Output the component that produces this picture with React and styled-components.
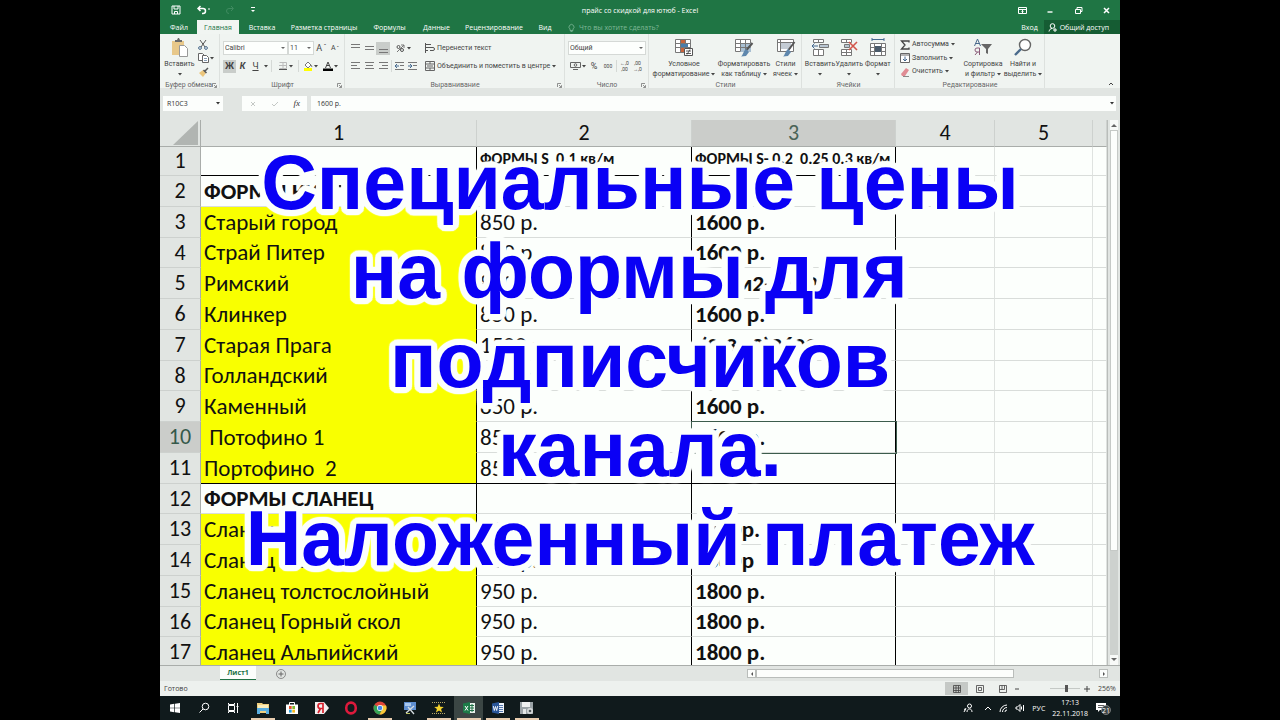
import React from 'react';
import styled, { createGlobalStyle, css } from 'styled-components';

const GlobalStyle = createGlobalStyle`
	* {
		box-sizing: border-box;
	}
	body {
		margin: 0;
		background: #000;
	}
	button,
	input,
	select {
		font: inherit;
		color: inherit;
		border: 0;
		padding: 0;
		margin: 0;
		background: none;
		border-radius: 0;
	}
`;

const rows = [
	{ name: '', small: 'ФОРМЫ S  0.1 кв/м', big: 'ФОРМЫ S- 0.2  0.25 0.3 кв/м', kind: 'head' },
	{ name: 'ФОРМЫ КИРПИЧ', kind: 'section' },
	{ name: 'Старый город', small: '850 р.', big: '1600 р.' },
	{ name: 'Страй Питер', small: '850 р.', big: '1600 р.' },
	{ name: 'Римский', small: '850 р.', big: '0.25м2-1600' },
	{ name: 'Клинкер', small: '850 р.', big: '1600 р.' },
	{ name: 'Старая Прага', small: '1500 р.', big: ' (0.3с 2)2600 р.' },
	{ name: 'Голландский', small: '850 р.', big: '' },
	{ name: 'Каменный', small: '850 р.', big: '1600 р.' },
	{ name: ' Потофино 1', small: '850 р.', big: '1600 р.', active: true },
	{ name: 'Портофино  2', small: '850 р.', big: '', last: true },
	{ name: 'ФОРМЫ СЛАНЕЦ', kind: 'section' },
	{ name: 'Сланец', small: '950 р.', big: '1800р.' },
	{ name: 'Сланец мелкий', small: '950 р.', big: '1800р' },
	{ name: 'Сланец толстослойный', small: '950 р.', big: '1800 р.' },
	{ name: 'Сланец Горный скол', small: '950 р.', big: '1800 р.' },
	{ name: 'Сланец Альпийский', small: '950 р.', big: '1800 р.' },
];

const Svg = ({ w = 12, h = w, children, ...rest }) => (
	<svg
		width={w}
		height={h}
		viewBox={`0 0 ${w} ${h}`}
		fill="none"
		stroke="currentColor"
		aria-hidden="true"
		{...rest}
	>
		{children}
	</svg>
);

const Caret = () => (
	<Svg w={4} h={3}>
		<path d="M0 0h4L2 2.4z" fill="currentColor" stroke="none" />
	</Svg>
);

const Launcher = () => (
	<Svg w={5}>
		<path d="M.5 4V.5H4M2 2l2.2 2.2M4.5 2.2v2.3H2.2" strokeWidth=".7" />
	</Svg>
);

const Lines = ({ ys, xs = [[1, 10]] }) => (
	<Svg w={11} h={11}>
		{ys.map((y, i) => {
			const [a, b] = xs[i % xs.length];
			return <path key={y} d={`M${a} ${y}H${b}`} stroke="#777" />;
		})}
	</Svg>
);

const PasteIcon = () => (
	<Svg w={20} h={19}>
		<path d="M2 3h12v14H2z" fill="#e8c88a" stroke="none" />
		<path d="M5 4V2h2l1-2h1l1 2h2v2z" fill="#6b6b6b" stroke="none" />
		<path d="M9.5 7.5h5l3 3v8h-8z" fill="#fff" stroke="#999" />
	</Svg>
);

const CutIcon = () => (
	<Svg w={10}>
		<path d="M2 0l5 7M8 0L3 7" stroke="#555" />
		<circle cx="2" cy="8" r="1.4" stroke="#4a6a8c" />
		<circle cx="8" cy="8" r="1.4" stroke="#4a6a8c" />
	</Svg>
);

const CopyIcon = () => (
	<Svg w={11} h={10} stroke="#666">
		<path d="M.5.5h4l2 2v5h-6z" fill="#fff" />
		<path d="M4.5 2.5h4l2 2v5h-6z" fill="#fff" />
		<path d="M6 5.5h3M6 7.5h3" stroke="#8aa0b8" />
	</Svg>
);

const BrushIcon = () => (
	<Svg w={11} h={10}>
		<path d="M1 6l4-3 3 3-3 4z" fill="#ecc67c" stroke="none" />
		<path d="M5.500 3l3 3M7 4l3-3" stroke="#555" strokeWidth="1.5" />
	</Svg>
);

const CondIcon = () => (
	<Svg w={20} h={19} stroke="#777">
		<path d="M1.500 1.500h15v13h-15zM1.500 5.500h15M1.500 9.500h15M6.500 1.500v13M11.500 1.500v13" fill="#fff" />
		<path d="M7 2h4v3H7zM7 10h3v4H7z" fill="#c8643c" stroke="none" />
		<path d="M7 6h7v3H7z" fill="#4a7dab" stroke="none" />
		<path d="M10.500 10.500h8v7h-8z" fill="#fff" stroke="#555" />
		<path d="M12 13h5M12 15.500h5M16 11.500l-3 5" stroke="#333" strokeWidth=".8" />
	</Svg>
);

const TableIcon = () => (
	<Svg w={20} h={19} stroke="#777">
		<path d="M1.500 1.500h15v12h-15z" fill="#fff" />
		<path d="M6 5h11v9H6z" fill="#a9bfd2" stroke="none" />
		<path d="M1.500 5.500h15M1.500 9.500h15M6.500 1.500v12M11.500 1.500v12" />
		<path d="M18.500 5l-6 7" stroke="#555" strokeWidth="2" />
		<path d="M12 11l3 3-3 4-5 .5c2-1 2-5 5-7.500z" fill="#5e87ad" stroke="none" />
	</Svg>
);

const StyleIcon = () => (
	<Svg w={20} h={19} stroke="#777">
		<path d="M1.500 1.500h16v12h-16z" fill="#fff" />
		<path d="M5 5h10v6H5z" fill="#c3cbd4" stroke="none" />
		<path d="M1.500 4.500h16M4.500 1.500v12" />
		<path d="M18.500 4l-6 8" stroke="#555" strokeWidth="2" />
		<path d="M12 11l3 3-3 4-5 .5c2-1 2-5 5-7.500z" fill="#5e87ad" stroke="none" />
	</Svg>
);

const InsertIcon = () => (
	<Svg w={20} h={19} stroke="#777">
		<path d="M3.500 1.500h10v3h-10zM8.500 1.500v3M3.500 11.500h10v6h-10zM8.500 11.500v6" fill="#fff" />
		<path d="M9.500 6.500h9v3h-9z" fill="#b9c6d2" />
		<path d="M8 8H2M4.500 5.500L2 8l2.500 2.500" stroke="#44698f" />
	</Svg>
);

const DeleteIcon = () => (
	<Svg w={20} h={19} stroke="#777">
		<path d="M2.500 1.500h10v3h-10zM7.500 1.500v3M2.500 11.500h10v6h-10zM7.500 11.500v6M2.500 14.500h10" fill="#fff" />
		<path d="M5.500 6.500h5v3h-5z" fill="#b9c6d2" />
		<path d="M10 4l8 8M18 4l-8 8" stroke="#d2554a" strokeWidth="1.600" />
	</Svg>
);

const FormatIcon = () => (
	<Svg w={20} h={19} stroke="#777">
		<path d="M4 1.500h12M4 0v3M16 0v3" stroke="#44698f" />
		<path d="M2.500 5.500h15v12h-15zM2.500 9.500h15M2.500 13.500h15M6.500 5.500v12M13.500 5.500v12" fill="#fff" />
		<path d="M7 8h6v6H7z" fill="#4b5b6b" stroke="none" />
	</Svg>
);

const SortIcon = () => (
	<Svg w={20} h={19}>
		<path d="M1.500 8l3-7 3 7M2.500 5.500h4" stroke="#4a6a8c" />
		<path d="M6.500 17v-7H4a2 2 0 0 0 0 4h2.500M4.500 14l-2.500 3" stroke="#8a5a78" />
		<path d="M8 6h11l-4 5v5l-2-1v-4z" fill="#666" stroke="none" />
	</Svg>
);

const FindIcon = () => (
	<Svg w={20} h={19}>
		<circle cx="12" cy="7" r="5.500" fill="#fff" stroke="#666" strokeWidth="1.400" />
		<path d="M8 11l-6 6" stroke="#4a6a8c" strokeWidth="2.400" />
	</Svg>
);

const WindowsLogo = () => (
	<Svg w={12} stroke="none" fill="#fff">
		<path d="M1 2.400l4.300-.6v3.900H1zM6 1.700l5-.7v4.700H6zM1 6.300h4.300v3.900L1 9.600zM6 6.300h5V11l-5-.7z" />
	</Svg>
);

const SearchIcon = () => (
	<Svg w={12} stroke="#fff">
		<circle cx="7.500" cy="4.500" r="3.300" />
		<path d="M5 7L1.500 10.500" />
	</Svg>
);

const TaskViewIcon = () => (
	<Svg w={12} stroke="#fff">
		<path d="M1.500 3.500h6v5h-6zM1.500 1v1.500h6V1M1.500 11V9.500h6V11M10.500 1v10M9.500 4.500h2" />
	</Svg>
);

const FolderIcon = () => (
	<Svg w={14} stroke="none">
		<path d="M1 2h5l1 1h6v9H1z" fill="#f0d080" />
		<path d="M2 4h10v5H2z" fill="#fbeebc" />
		<path d="M1 7h12v6h-3v-3H4v3H1z" fill="#5aaee0" />
	</Svg>
);

const StoreIcon = () => (
	<Svg w={14} stroke="none">
		<path d="M4.500 4V1.500h5V4" stroke="#fff" />
		<path d="M1 3.500h12V13H1z" fill="#fff" />
		<path d="M4 5h2.700v3H4z" fill="#e5532d" />
		<path d="M7.300 5H10v3H7.300z" fill="#7cb82f" />
		<path d="M4 8.600h2.700v3H4z" fill="#2e9fdc" />
		<path d="M7.300 8.600H10v3H7.300z" fill="#f6b71c" />
	</Svg>
);

const YandexIcon = () => (
	<Svg w={16} h={14}>
		<path d="M1 1h9l5 6-5 6H1z" fill="#f2eeee" stroke="none" />
		<path d="M9 12V2.500H6.500a2.500 2.500 0 0 0 0 5H9M6.500 7.500L4 12" stroke="#d8202c" strokeWidth="1.700" />
	</Svg>
);

const OperaIcon = () => (
	<Svg w={14}>
		<ellipse cx="7" cy="7" rx="4.800" ry="5.400" stroke="#dd1a3c" strokeWidth="2.600" />
	</Svg>
);

const ChromeIcon = () => (
	<Svg w={14} stroke="none">
		<circle cx="7" cy="7" r="6.500" fill="#e0463a" />
		<path d="M7 7L1.400 3.800A6.500 6.500 0 0 0 6.500 13.500L9.500 8z" fill="#35a455" />
		<path d="M7 4.500h6a6.500 6.500 0 0 1-6.500 9L9.500 8z" fill="#f7ca38" />
		<circle cx="7" cy="7" r="3" fill="#fff" />
		<circle cx="7" cy="7" r="2.300" fill="#4688e8" />
	</Svg>
);

const MonitorIcon = () => (
	<Svg w={14} stroke="none">
		<path d="M1 1h12v8H1z" fill="#5e8ed0" />
		<path d="M2 2h6v3H2z" fill="#a8c8ee" />
		<path d="M3 12l8-7M5 6l6 7" stroke="#d5dce0" strokeWidth="1.300" />
		<path d="M3 12h4v1H3z" fill="#b8c060" />
	</Svg>
);

const StarIcon = () => (
	<Svg w={14} stroke="none">
		<path d="M0 1.500h14M0 12.500h14" stroke="#b8a868" strokeDasharray="1 1" />
		<path d="M7 2.500l1.300 3.200 3.500.2-2.700 2.200.9 3.400-3-1.900-3 1.900.9-3.400L2.200 5.900l3.500-.2z" fill="#f5d32c" />
	</Svg>
);

const ExcelIcon = () => (
	<Svg w={14} stroke="none">
		<path d="M7 2h6v10H7z" fill="#e8f2ec" />
		<path d="M8 4.500h4M8 7h4M8 9.500h4M10 3v8" stroke="#217346" />
		<path d="M1 2.500L8 1v12l-7-1.500z" fill="#1d7c48" />
		<path d="M3 5l3 4.500M6 5L3 9.500" stroke="#fff" />
	</Svg>
);

const WordIcon = () => (
	<Svg w={14} stroke="none">
		<path d="M7 2h6v10H7z" fill="#eef2fa" />
		<path d="M8 4.500h4M8 6.500h4M8 8.500h4M8 10.500h4" stroke="#2a5699" strokeWidth=".8" />
		<path d="M1 2.500L8 1v12l-7-1.500z" fill="#2a5699" />
		<path d="M2.300 5l1 4.500 1.200-4 1.200 4 1-4.500" stroke="#fff" strokeWidth=".9" />
	</Svg>
);

const RecorderIcon = () => (
	<Svg w={16} h={14} stroke="none">
		<path d="M1 1h13v12H1z" fill="#9aa2a6" />
		<path d="M3 1h8v5H3z" fill="#eef0f0" />
		<path d="M4 8h3v5H4z" fill="#e4e8e8" />
		<circle cx="11" cy="10" r="3" fill="#d5d9da" />
		<circle cx="11" cy="10" r="1.300" fill="#50585c" />
	</Svg>
);

const tabs = [
	['Файл', 36],
	['Главная', 42, true],
	['Вставка', 46],
	['Разметка страницы', 78],
	['Формулы', 53],
	['Данные', 41],
	['Рецензирование', 74],
	['Вид', 28],
];

const taskbar = [
	[WindowsLogo, 'Пуск'],
	[SearchIcon, 'Поиск'],
	[TaskViewIcon, 'Представление задач'],
	[FolderIcon, 'Проводник', true],
	[StoreIcon, 'Магазин'],
	[YandexIcon, 'Яндекс'],
	[OperaIcon, 'Opera'],
	[ChromeIcon, 'Chrome', true],
	[MonitorIcon, 'Экран'],
	[StarIcon, 'Редактор', true],
	[ExcelIcon, 'Excel', true, true],
	[WordIcon, 'Word', true],
	[RecorderIcon, 'Запись', true],
];

const Big = ({ icon: I, lines, width }) => (
	<BigButton $width={width}>
		<I />
		<span>{lines[0]}</span>
		<span>
			{lines[1]} <Caret />
		</span>
	</BigButton>
);

const Ribbon = () => (
	<RibbonBar>
		<Group $width={60}>
			<GroupBody>
				<Big icon={PasteIcon} lines={['Вставить', '']} width={33} />
				<Stack>
					<Tool aria-label="Вырезать"><CutIcon /></Tool>
					<Tool aria-label="Копировать"><CopyIcon /><Caret /></Tool>
					<Tool aria-label="Формат по образцу"><BrushIcon /></Tool>
				</Stack>
			</GroupBody>
			<Caption>Буфер обмена <Launcher /></Caption>
		</Group>
		<Group $width={125}>
			<Rows>
				<ToolRow>
					<Combo $width={65}>
						<select aria-label="Шрифт"><option>Calibri</option></select>
					</Combo>
					<Combo $width={26}>
						<select aria-label="Размер"><option>11</option></select>
					</Combo>
					<Tool $width={15} $letter>A<sup>ˆ</sup></Tool>
					<Tool $width={12}>A<sup>ˇ</sup></Tool>
				</ToolRow>
				<ToolRow>
					<Tool $width={13} $on $letter><b>Ж</b></Tool>
					<Tool $width={13} $letter><b><i>К</i></b></Tool>
					<Tool $width={13} $letter><u>Ч</u></Tool>
					<Tool $width={8} aria-label="Ещё"><Caret /></Tool>
					<Divider />
					<Tool $width={24} aria-label="Границы">
						<Svg w={10}><path d="M1.500 1.500h7v6h-7M5 1.500v6M1 4.500h8" stroke="#bbb" /><path d="M1 8.500h8" stroke="#555" /></Svg>
						<Caret />
					</Tool>
					<Divider />
					<Tool $width={20} aria-label="Цвет заливки">
						<Svg w={10}><path d="M2 4l3-3 3 3-3 3zM8 4l1 2" stroke="#777" fill="#fff" /><path d="M1 7h8v3H1z" fill="#ff0" stroke="none" /></Svg>
						<Caret />
					</Tool>
					<Tool $width={20} aria-label="Цвет текста">
						<Svg w={10}><path d="M2.500 7L5 1l2.500 6M3.500 4.500h3" stroke="#444" /><path d="M0 7.500h10V10H0z" fill="#000" stroke="none" /></Svg>
						<Caret />
					</Tool>
				</ToolRow>
			</Rows>
			<Caption>Шрифт <Launcher /></Caption>
		</Group>
		<Group $width={220}>
			<Rows>
				<ToolRow>
					<Tool $width={14} aria-label="По верхнему краю"><Lines ys={[1.5, 4.5]} /></Tool>
					<Tool $width={14} aria-label="По середине"><Lines ys={[3.5, 6.5]} /></Tool>
					<Tool $width={14} $on aria-label="По нижнему краю"><Lines ys={[6.5, 9.5]} /></Tool>
					<Tool $width={26} aria-label="Ориентация">
						<Svg w={11}><path d="M2 9L9 2M6 2h3v3" stroke="#777" /><circle cx="3.500" cy="4" r="1.500" stroke="#555" /><circle cx="7" cy="7" r="1.500" stroke="#555" /></Svg>
						<Caret />
					</Tool>
					<WideTool>
						<Svg w={10} stroke="#555"><path d="M1 1.500h5M1 4.500h7a1 1 0 0 1 0 3H5M1 7.500h2M.5 0v10" /></Svg>
						Перенести текст
					</WideTool>
				</ToolRow>
				<ToolRow>
					<Tool $width={14} aria-label="По левому краю"><Lines ys={[1.5, 4.5, 7.5]} xs={[[1, 10], [1, 7]]} /></Tool>
					<Tool $width={14} aria-label="По центру"><Lines ys={[1.5, 4.5, 7.5]} xs={[[1, 10], [2, 9]]} /></Tool>
					<Tool $width={14} aria-label="По правому краю"><Lines ys={[1.5, 4.5, 7.5]} xs={[[1, 10], [4, 10]]} /></Tool>
					<Divider />
					<Tool $width={13} aria-label="Уменьшить отступ">
						<Svg w={11} stroke="#777"><path d="M1 1.500h9M6 4.500h4M1 8.500h9" /><path d="M5 5H1M3 3L1 5l2 2" stroke="#44698f" /></Svg>
					</Tool>
					<Tool $width={13} aria-label="Увеличить отступ">
						<Svg w={11} stroke="#777"><path d="M1 1.500h9M6 4.500h4M1 8.500h9" /><path d="M1 5h4M3 3l2 2-2 2" stroke="#44698f" /></Svg>
					</Tool>
					<WideTool>
						<Svg w={10} stroke="#666"><path d="M.5.5h9v9h-9zM.5 3h9M.5 7h9M5 .5V3M5 7v2.500M2 5h6" /></Svg>
						Объединить и поместить в центре <Caret />
					</WideTool>
				</ToolRow>
			</Rows>
			<Caption>Выравнивание <Launcher /></Caption>
		</Group>
		<Group $width={84}>
			<Rows>
				<ToolRow>
					<Combo $width={78}>
						<select aria-label="Числовой формат"><option>Общий</option></select>
					</Combo>
				</ToolRow>
				<ToolRow>
					<Tool $width={19} aria-label="Финансовый формат">
						<Svg w={11} stroke="#666"><path d="M.5 1.500h10v5H.5z" /><circle cx="5.500" cy="4" r="1.300" /><path d="M3 8.500h5" /></Svg>
						<Caret />
					</Tool>
					<Tool $width={14} $letter>%</Tool>
					<Tool $width={14} $tiny>000</Tool>
					<Divider />
					<Tool $width={13} $tiny>←,0<br />,00</Tool>
					<Tool $width={13} $tiny>,00<br />→,0</Tool>
				</ToolRow>
			</Rows>
			<Caption>Число <Launcher /></Caption>
		</Group>
		<Group $width={153}>
			<GroupBody>
				<Big icon={CondIcon} lines={['Условное', 'форматирование']} width={64} />
				<Big icon={TableIcon} lines={['Форматировать', 'как таблицу']} width={56} />
				<Big icon={StyleIcon} lines={['Стили', 'ячеек']} width={27} />
			</GroupBody>
			<Caption>Стили</Caption>
		</Group>
		<Group $width={93}>
			<GroupBody>
				<Big icon={InsertIcon} lines={['Вставить', '']} width={30} />
				<Big icon={DeleteIcon} lines={['Удалить', '']} width={30} />
				<Big icon={FormatIcon} lines={['Формат', '']} width={30} />
			</GroupBody>
			<Caption>Ячейки</Caption>
		</Group>
		<Group $width={150}>
			<GroupBody>
				<Stack $wide>
					<Tool $gap>
						<Svg w={10}><path d="M9 2.500V1H1.500L5 5 1.500 9H9V7.500" stroke="#444" strokeWidth="1.300" /></Svg>
						Автосумма <Caret />
					</Tool>
					<Tool $gap>
						<Svg w={10} stroke="#666"><path d="M.5.5h9v9h-9zM.5 2h9" fill="#fff" /><path d="M5 3.500v4.500M3 6l2 2 2-2" stroke="#44698f" /></Svg>
						Заполнить <Caret />
					</Tool>
					<Tool $gap>
						<Svg w={10}><path d="M1 7l5-6 3 2-4 6H2z" fill="#e08c94" stroke="none" /><path d="M3 9.500h6" stroke="#888" /></Svg>
						Очистить <Caret />
					</Tool>
				</Stack>
				<Big icon={SortIcon} lines={['Сортировка', 'и фильтр']} width={42} />
				<Big icon={FindIcon} lines={['Найти и', 'выделить']} width={38} />
			</GroupBody>
			<Caption>Редактирование</Caption>
		</Group>
		<Collapse aria-label="Свернуть ленту">
			<Svg w={6} h={4}><path d="M1 3l2-2 2 2" /></Svg>
		</Collapse>
	</RibbonBar>
);

const Sheet = () => (
	<SheetArea>
		<Grid>
			<colgroup>
				{[41, 276, 215, 204, 99, 98].map((w, i) => <Col key={i} $w={w} />)}
				<col />
			</colgroup>
			<thead>
				<tr>
					<Corner><Svg w={26} h={24}><path d="M26 0v24H1z" fill="#b1b5b2" stroke="none" /></Svg></Corner>
					{[1, 2, 3, 4, 5, ''].map(n => (
						<ColHead key={n} $on={n === 3}>{n}</ColHead>
					))}
				</tr>
			</thead>
			<tbody>
				{rows.map((r, i) => (
					<Row key={i} $first={i === 0}>
						<RowHead $on={r.active}>{i + 1}</RowHead>
						<Cell $fill={!r.kind} $bold={r.kind} $frame $under={r.last || r.kind === 'head'}>{r.name}</Cell>
						<Cell $frame $head={r.kind === 'head'} $under={r.last || r.kind === 'head'}>{r.small}</Cell>
						<Cell $frame $bold $head={r.kind === 'head'} $under={r.last || r.kind === 'head'} $active={r.active}>{r.big}</Cell>
						<Cell />
						<Cell />
						<Cell />
					</Row>
				))}
			</tbody>
		</Grid>
		<VScroll>
			<ScrollButton aria-label="Вверх"><Svg w={6} h={4}><path d="M0 4l3-3 3 3z" fill="#666" stroke="none" /></Svg></ScrollButton>
			<VThumb />
			<VTrack />
			<ScrollButton aria-label="Вниз"><Svg w={6} h={4}><path d="M0 0h6L3 3z" fill="#666" stroke="none" /></Svg></ScrollButton>
		</VScroll>
	</SheetArea>
);

const App = () => (
	<>
		<GlobalStyle />
		<Screen>
			<TitleBar>
				<QuickAccess>
					<Svg w={10} stroke="#fff"><path d="M1 1h8v8H1zM3 1v3h4V1M3.500 9V6.500h3V9" /></Svg>
					<Svg w={14} h={10} stroke="#fff"><path d="M4.500 1L2 3.500 4.500 6M2 3.500h5a2.500 2.500 0 0 1 0 5H6" strokeWidth="1.500" /><path d="M12 4h2" /></Svg>
					<Svg w={10} stroke="#3f8b60"><path d="M6 1l2.500 2.500L6 6M8 3.500H4a2.500 2.500 0 0 0 0 5" /></Svg>
					<Svg w={6} stroke="#fff"><path d="M1 .5h4" /><path d="M1 3h4L3 5z" fill="#fff" stroke="none" /></Svg>
				</QuickAccess>
				<span>прайс со скидкой для ютюб - Excel</span>
				<WindowTools>
					<button aria-label="Параметры ленты"><Svg w={9}><path d="M.5 1.500h8v6h-8zM.5 3.500h8M4.500 4v3M3.500 5.500h2" /></Svg></button>
					<button aria-label="Свернуть"><Svg w={9}><path d="M1.500 6h5" strokeWidth="1.400" /></Svg></button>
					<button aria-label="Восстановить"><Svg w={9}><path d="M1.500 3.500h5v4h-5zM3 3V1.500h5v4H7" /></Svg></button>
					<button aria-label="Закрыть"><Svg w={9}><path d="M2 2l5 5M7 2L2 7" strokeWidth="1.500" /></Svg></button>
				</WindowTools>
			</TitleBar>
			<TabBar>
				{tabs.map(([name, w, on]) => <Tab key={name} $w={w} $on={on}>{name}</Tab>)}
				<Hint>
					<Svg w={7} h={9}><path d="M2 6a2.500 2.500 0 1 1 3 0v1.500H2zM2.500 8.500h2" strokeWidth=".8" /></Svg>
					Что вы хотите сделать?
				</Hint>
				<SignIn>Вход</SignIn>
				<Share>
					<Svg w={9}><circle cx="4.500" cy="3" r="2.300" /><path d="M1 8.500c.5-2 1.500-3 3-3M5 7h4M7 5v4" /></Svg>
					Общий доступ
				</Share>
			</TabBar>
			<Ribbon />
			<FormulaBar>
				<NameBox>
					<input aria-label="Имя ячейки" defaultValue="R10C3" />
					<Caret />
				</NameBox>
				<FxTools>
					<Svg w={8} stroke="#c4c8c5"><path d="M2 2l4 4M6 2L2 6" /></Svg>
					<Svg w={8} stroke="#c4c8c5"><path d="M1 4l2 2 4-4" /></Svg>
					<i>fx</i>
				</FxTools>
				<Formula>
					<input aria-label="Строка формул" defaultValue="1600 р." />
					<Caret />
				</Formula>
			</FormulaBar>
			<Sheet />
			<SheetTabs>
				<SheetTab>Лист1</SheetTab>
				<AddSheet aria-label="Новый лист"><Svg w={10}><circle cx="5" cy="5" r="4.500" strokeWidth=".7" /><path d="M2.500 5h5M5 2.500v5" /></Svg></AddSheet>
				<HScroll>
					<ArrowBox aria-label="Влево"><Svg w={4} h={6}><path d="M3 1v4L1 3z" fill="#555" stroke="none" /></Svg></ArrowBox>
					<HThumb />
					<HTrack />
					<ArrowBox aria-label="Вправо"><Svg w={4} h={6}><path d="M1 1v4l2-2z" fill="#555" stroke="none" /></Svg></ArrowBox>
				</HScroll>
			</SheetTabs>
			<StatusBar>
				<span>Готово</span>
				<ViewTools>
					<ViewButton $on aria-label="Обычный"><Svg w={8}><path d="M.5.5h7v7h-7zM.5 3h7M.5 5.500h7M3 .5v7M5.500 .5v7" strokeWidth=".8" /></Svg></ViewButton>
					<ViewButton aria-label="Разметка"><Svg w={8}><path d="M.5.5h7v7h-7zM2.500 2.500h3v3h-3z" strokeWidth=".8" /></Svg></ViewButton>
					<ViewButton aria-label="Страницы"><Svg w={8}><path d="M.5.5h7v7h-7zM3 .5v4M5.500 .5v4H.5" strokeWidth=".8" /></Svg></ViewButton>
				</ViewTools>
				<Zoom>
					<Svg w={6}><path d="M1 3h4" /></Svg>
					<ZoomSlider type="range" min="0" max="100" defaultValue="74" aria-label="Масштаб" />
					<Svg w={6}><path d="M0 3h6M3 0v6" /></Svg>
				</Zoom>
				<Percent>256%</Percent>
			</StatusBar>
			<Taskbar>
				<Apps>
					{taskbar.map(([I, name, open, on]) => (
						<AppButton key={name} aria-label={name} $open={open} $on={on}><I /></AppButton>
					))}
				</Apps>
				<Tray>
					<Svg w={10}><circle cx="6.500" cy="3" r="2" /><path d="M4 9c0-2 1-3 2.500-3S9 7 9 9M1 9l2-4M1 6l2 1" /></Svg>
					<Svg w={8} h={6}><path d="M1 5l3-3 3 3" /></Svg>
					<Svg w={9}><path d="M1 8a7 7 0 0 1 7-7M3.500 8A4.500 4.500 0 0 1 8 3.500M6 8a2 2 0 0 1 2-2" /></Svg>
					<Svg w={10}><path d="M1 4h1.500L5 1.500v7L2.500 6H1zM6.500 3.500v3M8.500 2v6" /></Svg>
					<span>РУС</span>
					<Clock>
						<span>17:13</span>
						<span>22.11.2018</span>
					</Clock>
					<Svg w={16} h={14}>
						<path d="M1 2h10v7H5l-2 2V9H1z" fill="#fff" stroke="none" />
						<path d="M3 4.500h6M3 6.500h6" stroke="#333" strokeWidth=".8" />
						<circle cx="11" cy="9" r="4.500" fill="#3a4242" stroke="#aaa" strokeWidth=".6" />
						<text x="11" y="11.500" fontSize="7" textAnchor="middle" fill="#fff" stroke="none">21</text>
					</Svg>
				</Tray>
			</Taskbar>
			<Banner>{'Специальные цены\nна формы для \nподписчиков\nканала.\nНаложенный платеж'}</Banner>
		</Screen>
	</>
);

// ring of shadows, gives the banner letters a rounded outline
const outline = (radius, color, steps = 24) =>
	Array.from({ length: steps }, (_, i) => {
		const a = (i / steps) * Math.PI * 2;
		return `${(Math.cos(a) * radius).toFixed(1)}px ${(Math.sin(a) * radius).toFixed(1)}px 1px ${color}`;
	}).join(', ');

const Screen = styled.div`
	position: relative;
	display: flex;
	flex-direction: column;
	width: 75%;
	height: 100vh;
	margin: 0 auto;
	overflow: hidden;
	background: #e1e5e2;
	color: #444;
	font-family: 'Open Sans', 'Noto Sans', sans-serif;
	font-size: 7px;
	line-height: 9px;
	white-space: nowrap;
`;

const TitleBar = styled.header`
	display: grid;
	grid-template-columns: 1fr auto 1fr;
	align-items: center;
	height: 20px;
	background: #1f7544;
	color: #fff;
`;

const QuickAccess = styled.div`
	display: flex;
	align-items: center;
	gap: 15px;
	padding-left: 11px;
`;

const WindowTools = styled.div`
	display: flex;
	justify-content: flex-end;
	gap: 19px;
	padding-right: 9px;
	button {
		display: flex;
	}
`;

const TabBar = styled.nav`
	display: flex;
	height: 14px;
	padding-left: 1px;
	background: #1f7544;
	color: #fff;
`;

const Tab = styled.button`
	width: ${props => props.$w}px;
	${props =>
		props.$on &&
		css`
			background: #f1f5f2;
			color: #217346;
		`}
`;

const Hint = styled.label`
	display: flex;
	align-items: center;
	gap: 4px;
	flex: 1;
	padding-left: 9px;
	color: #7fb898;
`;

const SignIn = styled.button`
	padding: 0 6px;
`;

const Share = styled.button`
	display: flex;
	align-items: center;
	gap: 3px;
	padding: 0 11px 0 4px;
	background: #155c33;
`;

const RibbonBar = styled.section`
	display: flex;
	height: 54px;
	background: #f0f4f1;
	font-family: Roboto, sans-serif;
`;

const Group = styled.div`
	display: flex;
	flex-direction: column;
	flex: none;
	width: ${props => props.$width}px;
	padding: 2px 2px 0 3px;
	border-right: 1px solid #dde1de;
`;

const GroupBody = styled.div`
	display: flex;
	height: 45px;
`;

const Rows = styled.div`
	display: flex;
	flex-direction: column;
	gap: 4px;
	height: 45px;
	padding-top: 5px;
`;

const ToolRow = styled.div`
	display: flex;
	align-items: center;
	height: 14px;
`;

const Caption = styled.div`
	display: grid;
	grid-template-columns: 1fr auto 1fr;
	align-items: center;
	height: 7px;
	color: #666;
	svg {
		justify-self: end;
	}
	&::before {
		content: '';
	}
`;

const BigButton = styled.button`
	display: flex;
	flex-direction: column;
	align-items: center;
	width: ${props => props.$width}px;
	padding-top: 2px;
	span {
		display: flex;
		align-items: center;
		gap: 2px;
		min-height: 10px;
	}
	> svg {
		flex: none;
		margin-bottom: 2px;
	}
`;

const Stack = styled.div`
	display: flex;
	flex-direction: column;
	justify-content: space-between;
	padding: 2px 0 3px 2px;
	width: ${props => (props.$wide ? '64px' : '20px')};
	button {
		justify-content: flex-start;
	}
`;

const Tool = styled.button`
	display: flex;
	align-items: center;
	justify-content: center;
	gap: ${props => (props.$gap ? '2px' : '1px')};
	width: ${props => (props.$width ? `${props.$width}px` : 'auto')};
	height: 13px;
	background: ${props => (props.$on ? '#c9cdca' : 'transparent')};
	${props => props.$tiny && 'font-size: 5px; line-height: 6px;'}
	${props => props.$letter && 'font-size: 9px;'}
	sup {
		line-height: 0;
	}
`;

const WideTool = styled(Tool)`
	justify-content: flex-start;
	gap: 2px;
	width: 137px;
	margin-left: auto;
`;

const Divider = styled.span`
	width: 1px;
	height: 12px;
	margin: 0 1px;
	background: #d5d9d6;
`;

const Combo = styled.label`
	display: flex;
	width: ${props => props.$width}px;
	height: 14px;
	background: #fdfffd;
	border: 1px solid #d5d9d6;
	select {
		flex: 1;
		min-width: 0;
		padding-left: 1px;
		appearance: none;
	}
	&::after {
		content: '';
		align-self: center;
		margin-right: 2px;
		border: 2px solid transparent;
		border-top-color: #666;
		border-bottom: 0;
	}
`;

const Collapse = styled.button`
	display: flex;
	align-items: flex-end;
	margin-left: auto;
	padding: 0 6px 2px 0;
`;

const FormulaBar = styled.div`
	display: flex;
	height: 32px;
	padding: 8px 4px 9px 3px;
	color: #333;
	input {
		flex: 1;
		min-width: 0;
	}
`;

const NameBox = styled.div`
	display: flex;
	align-items: center;
	width: 60px;
	margin-right: 19px;
	padding: 0 3px 0 4px;
	background: #fcfefc;
`;

const FxTools = styled.div`
	display: flex;
	align-items: center;
	justify-content: space-around;
	width: 65px;
	margin-right: 4px;
	background: #fcfefc;
	i {
		font-family: 'Liberation Serif', serif;
		font-size: 9px;
	}
`;

const Formula = styled.div`
	display: flex;
	align-items: center;
	flex: 1;
	padding: 0 2px 0 6px;
	background: #fcfefc;
`;

const SheetArea = styled.main`
	display: flex;
	flex: 1;
	min-height: 0;
	overflow: hidden;
	border-bottom: 1px solid #a9adaa;
`;

const Grid = styled.table`
	flex: 1;
	min-width: 0;
	align-self: flex-start;
	table-layout: fixed;
	border-collapse: separate;
	border-spacing: 0;
	color: #111;
	font-family: Carlito, Calibri, 'Noto Sans', sans-serif;
	font-size: 22px;
	line-height: 26px;
`;

const Col = styled.col`
	width: ${props => props.$w}px;
`;

const Corner = styled.th`
	height: 27px;
	padding: 0 2px 0 0;
	border-right: 1px solid #a9adaa;
	border-bottom: 1px solid #a9adaa;
	text-align: right;
	svg {
		display: block;
		margin-left: auto;
	}
`;

const ColHead = styled.th`
	height: 27px;
	padding: 0;
	font-weight: normal;
	border-right: 1px solid #cdd1ce;
	border-bottom: 1px solid #a9adaa;
	${props => props.$on && 'background: #cbcdca; color: #4a6356;'}
`;

const Row = styled.tr`
	height: ${props => (props.$first ? '29px' : '31px')};
	&:nth-child(4n) {
		height: 30px;
	}
`;

const RowHead = styled.th`
	padding: 0;
	font-weight: normal;
	border-right: 1px solid #a9adaa;
	border-bottom: 1px solid #cdd1ce;
	${props => props.$on && 'background: #cbcdca; color: #35594a;'}
`;

const Cell = styled.td`
	position: relative;
	padding: 0 0 1px 3px;
	overflow: hidden;
	white-space: pre;
	background: ${props => (props.$fill ? '#f9ff00' : '#fcfffc')};
	border-right: 1px solid ${props => (props.$frame ? '#000' : '#dfe3e0')};
	border-bottom: 1px solid ${props => (props.$under ? '#000' : props.$fill ? '#f9ff00' : '#d9ddda')};
	font-size: ${props => (props.$head ? '16px' : '23px')};
	font-weight: ${props => (props.$bold || props.$head ? 'bold' : 'normal')};
	${props => props.$head && 'line-height: 18px; padding-bottom: 4px;'}
	${props => props.$active && 'outline: 1px solid #3c5c4c; z-index: 1;'}
`;

const VScroll = styled.div`
	display: flex;
	flex-direction: column;
	width: 13px;
	padding: 0 2px;
	border-left: 1px solid #b9bdba;
`;

const ScrollButton = styled.button`
	display: flex;
	align-items: center;
	justify-content: center;
	height: 10px;
	background: #f8faf8;
`;

const VThumb = styled.div`
	flex: 421;
	background: #fcfefc;
	border: 1px solid #c5c9c6;
`;

const VTrack = styled.div`
	flex: 105;
	background: #cdd1ce;
`;

const SheetTabs = styled.div`
	display: flex;
	height: 15px;
`;

const SheetTab = styled.button`
	width: 36px;
	height: 14px;
	margin-left: 60px;
	background: #fcfefc;
	border-bottom: 1px solid #217346;
	color: #217346;
	font-weight: bold;
`;

const AddSheet = styled.button`
	display: flex;
	align-items: center;
	margin-left: 20px;
	color: #666;
`;

const HScroll = styled.div`
	display: flex;
	align-items: center;
	width: 361px;
	margin: 0 12px 0 auto;
`;

const ArrowBox = styled.button`
	display: flex;
	align-items: center;
	justify-content: center;
	width: 9px;
	height: 9px;
	background: #fcfefc;
	border: 1px solid #b9bdba;
`;

const HThumb = styled.div`
	flex: 257;
	height: 9px;
	background: #fcfefc;
	border: 1px solid #b9bdba;
`;

const HTrack = styled.div`
	flex: 86;
`;

const StatusBar = styled.footer`
	display: flex;
	align-items: center;
	height: 15px;
	padding: 0 4px;
	background: #edf1ee;
`;

const ViewTools = styled.div`
	display: flex;
	height: 13px;
	margin-left: auto;
`;

const ViewButton = styled.button`
	display: flex;
	align-items: center;
	justify-content: center;
	width: 23px;
	background: ${props => (props.$on ? '#c5c9c6' : 'transparent')};
`;

const Zoom = styled.div`
	display: flex;
	align-items: center;
	width: 76px;
`;

const ZoomSlider = styled.input`
	flex: 1;
	min-width: 0;
	height: 9px;
	appearance: none;
	background: linear-gradient(#c5c9c6, #c5c9c6) right 4px center / 30px 1px no-repeat;
	&::-webkit-slider-thumb {
		appearance: none;
		width: 3px;
		height: 7px;
		background: #555;
	}
`;

const Percent = styled.span`
	width: 26px;
	padding-left: 8px;
`;

const Taskbar = styled.div`
	display: flex;
	height: 24px;
	background: #101a1c;
	color: #fff;
`;

const Apps = styled.div`
	display: flex;
	width: 382px;
`;

const AppButton = styled.button`
	display: flex;
	align-items: center;
	justify-content: center;
	flex: 1;
	background-color: ${props => (props.$on ? '#3b4644' : 'transparent')};
	${props =>
		props.$open &&
		css`
			background-image: linear-gradient(#e8cdb0, #e8cdb0);
			background-position: center bottom;
			background-size: 24px 2px;
			background-repeat: no-repeat;
		`}
`;

const Tray = styled.div`
	display: flex;
	align-items: center;
	gap: 7px;
	margin-left: auto;
	padding-right: 9px;
	> svg:first-child {
		margin-right: 4px;
	}
`;

const Clock = styled.div`
	display: flex;
	flex-direction: column;
	align-items: center;
	line-height: 11px;
`;

const Banner = styled.h1`
	position: absolute;
	top: 138px;
	left: 0;
	right: 0;
	z-index: 2;
	margin: 0;
	color: #0a00f5;
	font-family: 'Liberation Sans', Arial, sans-serif;
	font-size: 77px;
	line-height: 89px;
	text-align: center;
	white-space: pre;
	text-shadow: ${outline(6, '#fcfffc')}, ${outline(3, '#fcfffc', 12)};
	pointer-events: none;
`;

export default App;
